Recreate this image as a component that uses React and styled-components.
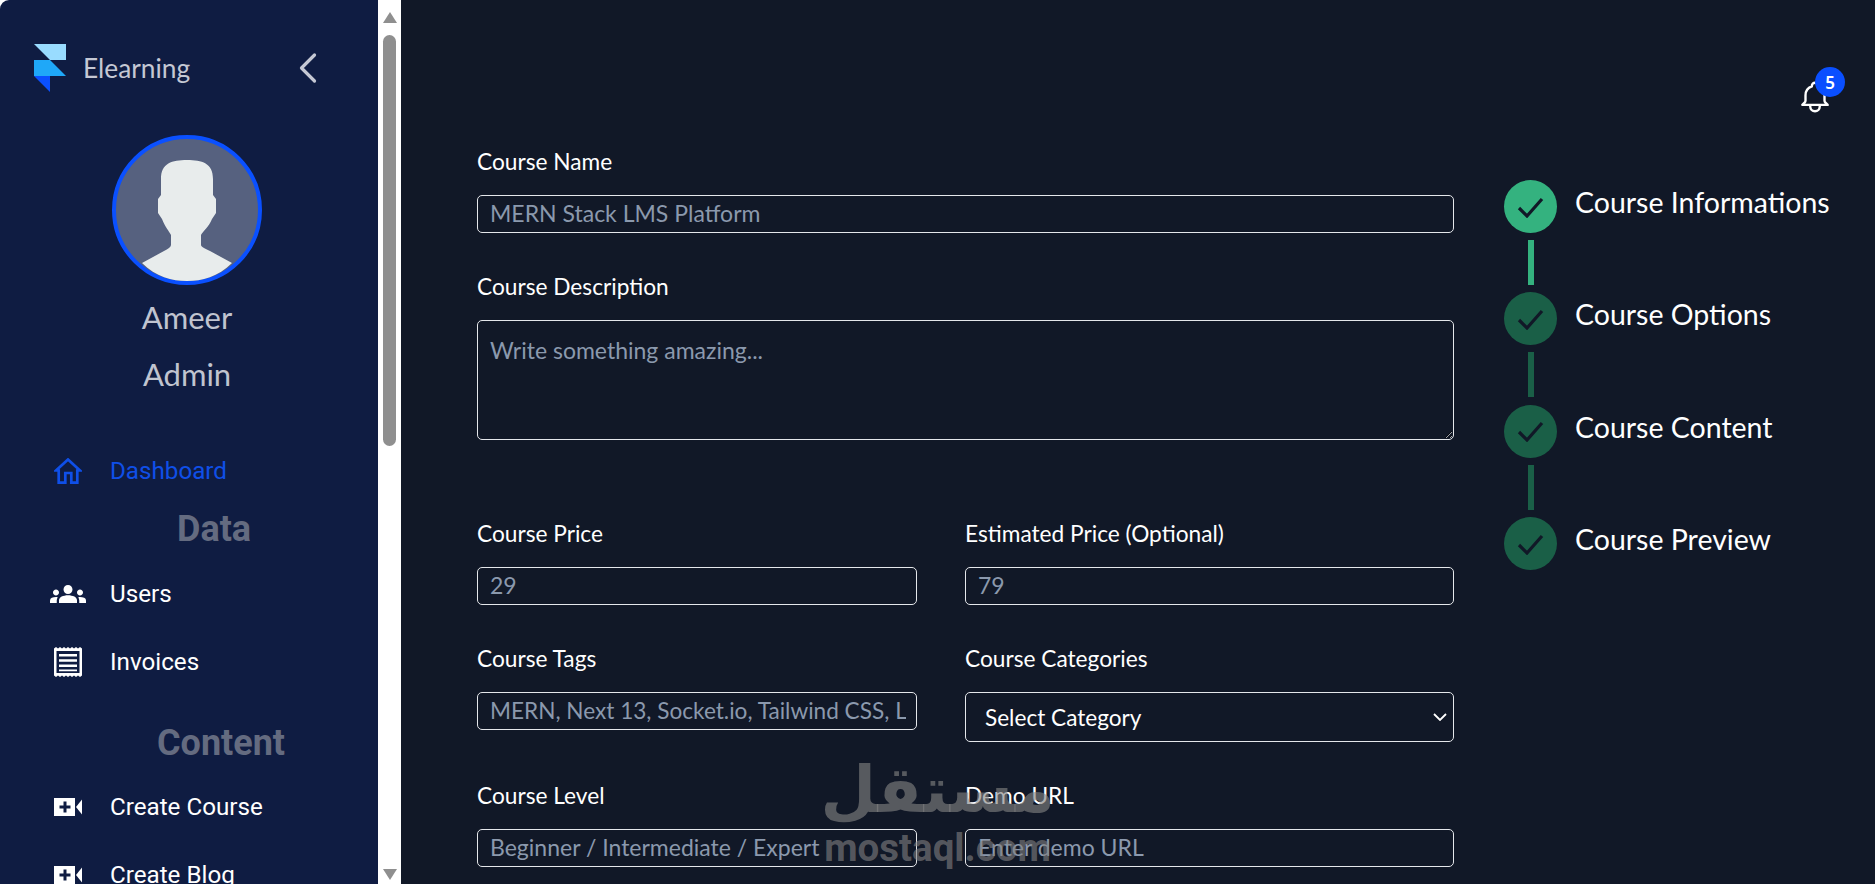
import React from 'react';
import styled, { createGlobalStyle } from 'styled-components';
import { MdGroups } from 'react-icons/md';
import { FiChevronLeft } from 'react-icons/fi';
import { HiOutlineBell } from 'react-icons/hi';

const GlobalStyle = createGlobalStyle`
  html, body {
    margin: 0;
    height: 100%;
    background: #ffffff;
    overflow: hidden;
  }
  * { box-sizing: border-box; }
`;

const Page = styled.div`
  display: flex;
  height: 884px;
  overflow: hidden;
  position: relative;
  background: #ffffff;
  font-family: Lato, "Noto Sans", sans-serif;
`;

const Sidebar = styled.aside`
  width: 378px;
  flex: none;
  background: #0f1c42;
  border-top-left-radius: 9px;
  padding: 44px 34px 0;
  overflow: hidden;
`;

const Brand = styled.div`
  display: flex;
  align-items: center;
  height: 48px;
`;

const BrandName = styled.span`
  margin-left: 17px;
  font-size: 26.3px;
  color: #c5c8d4;
  flex: 1;
`;

const Back = styled.span`
  display: flex;
  margin-right: 10px;
  color: #c5c8d4;
  font-size: 52px;
  svg { stroke-width: 1.5; }
`;

const Profile = styled.div`
  display: flex;
  flex-direction: column;
  align-items: center;
  margin: 43px 0 0 -34px;
  width: 378px;
  padding-right: 4px;
`;

const Avatar = styled.svg`
  width: 150px;
  height: 150px;
  display: block;
  margin-bottom: 4px;
`;

const ProfileLine = styled.div`
  font-size: 31px;
  line-height: 57px;
  color: #c0c4d0;
`;

const Menu = styled.nav`
  margin-top: 34px;
  display: flex;
  flex-direction: column;
  font-family: Roboto, sans-serif;
`;

const Item = styled.div`
  display: flex;
  align-items: center;
  height: 68px;
  font-size: 24.2px;
  color: ${(p) => (p.$active ? '#0f4fe8' : '#ffffff')};
`;

const ItemIcon = styled.span`
  width: 76px;
  flex: none;
  display: flex;
  align-items: center;
  justify-content: center;
  padding-right: 8px;
  font-size: 36px;
`;

const Section = styled.div`
  font-size: 36px;
  font-weight: 700;
  color: #646b80;
  height: ${(p) => p.$height}px;
  padding-top: ${(p) => p.$top}px;
  padding-left: ${(p) => p.$indent}px;
  line-height: 48px;
`;

const Scrollbar = styled.div`
  width: 23px;
  flex: none;
  background: #ffffff;
  display: flex;
  flex-direction: column;
  align-items: center;
  padding: 12px 0 4px;
`;

const Arrow = styled.span`
  width: 0;
  height: 0;
  flex: none;
  border-left: 7px solid transparent;
  border-right: 7px solid transparent;
  ${(p) => (p.$up ? 'border-bottom: 11px solid #8f8f8f;' : 'border-top: 11px solid #8f8f8f;')}
`;

const Thumb = styled.span`
  width: 13px;
  height: 411px;
  flex: none;
  margin: 12px 0 auto;
  border-radius: 7px;
  background: #8f8f8f;
`;

const Main = styled.main`
  flex: 1;
  min-width: 0;
  display: flex;
  flex-direction: column;
  background: #111827;
`;

const Topbar = styled.div`
  height: 147px;
  flex: none;
  display: flex;
  justify-content: flex-end;
  padding: 67px 30px 0 0;
`;

const BellWrap = styled.div`
  position: relative;
  width: 49px;
  height: 49px;
  color: #fff;
  font-size: 38px;
  line-height: 0;
  padding-top: 11px;
  svg { stroke-width: 1.5; }
`;

const Badge = styled.span`
  position: absolute;
  top: 0;
  right: 0;
  width: 30px;
  height: 30px;
  border-radius: 50%;
  background: #0a4fff;
  color: #fff;
  font-family: "Noto Sans", sans-serif;
  font-size: 17px;
  line-height: 1;
  font-weight: 600;
  display: flex;
  align-items: center;
  justify-content: center;
`;

const Content = styled.div`
  display: flex;
  padding-left: 76px;
  gap: 50px;
`;

const Form = styled.form`
  width: 977px;
  flex: none;
`;

const Label = styled.label`
  display: block;
  font-size: 22.7px;
  line-height: 30px;
  height: 34px;
  color: #fff;
  margin-bottom: 14px;
`;

const Field = styled.div`
  margin-bottom: ${(p) => p.$after}px;
`;

const TextInput = styled.input`
  display: block;
  width: 100%;
  height: 38px;
  padding: 0 ${(p) => (p.$tight ? 10 : 12)}px 2px 12px;
  border: 1px solid #e5e7eb;
  border-radius: 5px;
  background: transparent;
  font: inherit;
  font-size: ${(p) => (p.$tight ? 22.6 : 23)}px;
  color: #fff;
  &::placeholder { color: #8b99ad; opacity: 1; }
`;

const TextArea = styled.textarea`
  display: block;
  width: 100%;
  height: 120px;
  padding: 15px 12px 12px;
  border: 1px solid #e5e7eb;
  border-radius: 5px;
  background: transparent;
  font: inherit;
  font-size: 23px;
  color: #fff;
  &::placeholder { color: #8b99ad; opacity: 1; }
`;

const chevron =
  "data:image/svg+xml,%3Csvg xmlns='http://www.w3.org/2000/svg' width='14' height='8' viewBox='0 0 14 8' fill='none' stroke='white' stroke-width='1.8'%3E%3Cpath d='M1 1l6 6 6-6'/%3E%3C/svg%3E";

const Select = styled.select`
  display: block;
  width: 100%;
  height: 50px;
  padding: 0 19px;
  border: 1px solid #e5e7eb;
  border-radius: 5px;
  appearance: none;
  background: #111827 url("${chevron}") no-repeat right 6px center;
  font: inherit;
  font-size: 22.6px;
  color: #fff;
`;

const Row = styled.div`
  display: grid;
  grid-template-columns: 440px 489px;
  column-gap: 48px;
  margin-bottom: ${(p) => p.$after}px;
`;

const Stepper = styled.div`
  display: flex;
  flex-direction: column;
  margin-top: 33px;
`;

const Step = styled.div`
  display: flex;
  align-items: flex-start;
  gap: 18px;
  height: 112.4px;
  font-size: 28.5px;
  line-height: 45px;
  color: #fff;
`;

const StepMark = styled.div`
  width: 53px;
  flex: none;
  display: flex;
  flex-direction: column;
  align-items: center;
`;

const StepCircle = styled.span`
  width: 53px;
  height: 53px;
  border-radius: 50%;
  background: ${(p) => (p.$on ? '#34b27f' : '#1a5f47')};
  color: #111827;
  display: flex;
  align-items: center;
  justify-content: center;
`;

const StepLine = styled.span`
  width: 6px;
  height: 45px;
  margin-top: 7px;
  background: ${(p) => (p.$on ? '#34b27f' : '#1a5f47')};
`;

const Watermark = styled.div`
  position: absolute;
  left: 825px;
  top: 750px;
  width: 225px;
  display: flex;
  flex-direction: column;
  align-items: center;
  color: rgba(130, 130, 130, 0.62);
  font-weight: 700;
  white-space: nowrap;
  pointer-events: none;
`;

const WatermarkAr = styled.div`
  font-family: "DejaVu Sans", sans-serif;
  font-size: 64px;
  line-height: 80px;
`;

const WatermarkEn = styled.div`
  font-family: Roboto, sans-serif;
  font-size: 38.5px;
  line-height: 36px;
`;

const steps = ['Course Informations', 'Course Options', 'Course Content', 'Course Preview'];

const Check = () => (
  <svg width="28" height="22" viewBox="0 0 28 22" fill="none" stroke="currentColor" strokeWidth="3.2">
    <path d="M2 12l8 8L25 3" />
  </svg>
);

const HomeIcon = () => (
  <svg width="28" height="26" viewBox="0 0 28 26" fill="none" stroke="currentColor" strokeWidth="2.7">
    <path d="M2 12.5L14 1.5L26 12.5H23.3V24.7H17.3V15H11.3V24.7H4.7V12.5Z" />
  </svg>
);

const serrated = () => {
  let top = 'M0 1.5';
  for (let x = 0; x < 28; x += 4) top += `L${x + 2} 0L${x + 4} 1.5`;
  let bottom = 'L28 28.5';
  for (let x = 28; x > 0; x -= 4) bottom += `L${x - 2} 30L${x - 4} 28.5`;
  return `${top}${bottom}ZM2.5 4V26H25.5V4Z`;
};

const ReceiptIcon = () => (
  <svg width="28" height="30" viewBox="0 0 28 30" fill="currentColor">
    <path d={serrated()} fillRule="evenodd" />
    <path d="M5 7h18v2.6H5zM5 12.2h18v2.6H5zM5 17.4h18v2.6H5zM5 22.6h18v1.6H5z" />
  </svg>
);

const VideoPlusIcon = () => (
  <svg width="28" height="18" viewBox="0 0 28 18" fill="currentColor">
    <path
      fillRule="evenodd"
      d="M0 0H21V18H0ZM9.5 3.5V7.5H5.5V10.5H9.5V14.5H12.5V10.5H16.5V7.5H12.5V3.5Z"
    />
    <path d="M22 9L28 1.5V16.5Z" />
  </svg>
);

export default function App() {
  return (
    <Page>
      <GlobalStyle />
      <Sidebar>
        <Brand>
          <svg width="32" height="48" viewBox="0 0 32 48">
            <path d="M0 0h32v16H16z" fill="#99dcff" />
            <path d="M0 16h16l16 16H0z" fill="#1fa8f8" />
            <path d="M0 32h16v16z" fill="#0a50ff" />
          </svg>
          <BrandName>Elearning</BrandName>
          <Back><FiChevronLeft /></Back>
        </Brand>
        <Profile>
          <Avatar viewBox="0 0 150 150">
            <circle cx="75" cy="75" r="73" fill="#56617f" stroke="#0a50ff" strokeWidth="4" />
            <path
              d="M75 25C60 25 49 28 49 44V60L46 64V78L50 84C53 92 57 96 59 100V110C59 112 56 114 52 116L30 128C44 142 60 146 75 146S106 142 120 128L98 116C94 114 89 112 89 110V100C91 96 97 92 100 84L104 78V64L101 60V44C101 28 90 25 75 25Z"
              fill="#e8ecec"
            />
          </Avatar>
          <ProfileLine>Ameer</ProfileLine>
          <ProfileLine>Admin</ProfileLine>
        </Profile>
        <Menu>
          <Item $active><ItemIcon><HomeIcon /></ItemIcon>Dashboard</Item>
          <Section $height={55} $top={0} $indent={143}>Data</Section>
          <Item><ItemIcon><MdGroups /></ItemIcon>Users</Item>
          <Item><ItemIcon><ReceiptIcon /></ItemIcon>Invoices</Item>
          <Section $height={77} $top={23} $indent={123}>Content</Section>
          <Item><ItemIcon><VideoPlusIcon /></ItemIcon>Create Course</Item>
          <Item><ItemIcon><VideoPlusIcon /></ItemIcon>Create Blog</Item>
        </Menu>
      </Sidebar>
      <Scrollbar>
        <Arrow $up />
        <Thumb />
        <Arrow />
      </Scrollbar>
      <Main>
        <Topbar>
          <BellWrap>
            <HiOutlineBell />
            <Badge>5</Badge>
          </BellWrap>
        </Topbar>
        <Content>
          <Form>
            <Field $after={39}>
              <Label>Course Name</Label>
              <TextInput readOnly placeholder="MERN Stack LMS Platform" />
            </Field>
            <Field $after={79}>
              <Label>Course Description</Label>
              <TextArea readOnly placeholder="Write something amazing..." />
            </Field>
            <Row $after={39}>
              <Field $after={0}>
                <Label>Course Price</Label>
                <TextInput readOnly placeholder="29" />
              </Field>
              <Field $after={0}>
                <Label>Estimated Price (Optional)</Label>
                <TextInput readOnly placeholder="79" />
              </Field>
            </Row>
            <Row $after={39}>
              <Field $after={0}>
                <Label>Course Tags</Label>
                <TextInput $tight readOnly placeholder="MERN, Next 13, Socket.io, Tailwind CSS, LMS" />
              </Field>
              <Field $after={0}>
                <Label>Course Categories</Label>
                <Select defaultValue="">
                  <option value="">Select Category</option>
                </Select>
              </Field>
            </Row>
            <Row $after={0}>
              <Field $after={0}>
                <Label>Course Level</Label>
                <TextInput readOnly placeholder="Beginner / Intermediate / Expert" />
              </Field>
              <Field $after={0}>
                <Label>Demo URL</Label>
                <TextInput readOnly placeholder="Enter demo URL" />
              </Field>
            </Row>
          </Form>
          <Stepper>
            {steps.map((s, i) => (
              <Step key={s}>
                <StepMark>
                  <StepCircle $on={i === 0}><Check /></StepCircle>
                  {i < steps.length - 1 && <StepLine $on={i === 0} />}
                </StepMark>
                {s}
              </Step>
            ))}
          </Stepper>
        </Content>
      </Main>
      <Watermark>
        <WatermarkAr>مستقل</WatermarkAr>
        <WatermarkEn>mostaql.com</WatermarkEn>
      </Watermark>
    </Page>
  );
}
